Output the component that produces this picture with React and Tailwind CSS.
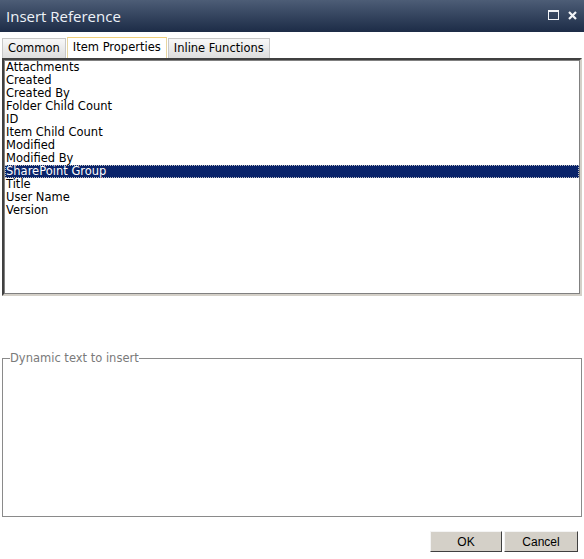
import React from "react";

const fields = [
  "Attachments",
  "Created",
  "Created By",
  "Folder Child Count",
  "ID",
  "Item Child Count",
  "Modified",
  "Modified By",
  "SharePoint Group",
  "Title",
  "User Name",
  "Version",
];

const tabs = ["Common", "Item Properties", "Inline Functions"];

function TitleBar() {
  return (
    <div className="h-[32px] flex items-center justify-between pl-[6px] pr-[6px] bg-gradient-to-b from-[#4d5d76] to-[#1d2c47]">
      <span className="text-[15px] text-[#eef2f8] font-['Open_Sans',sans-serif] leading-none">
        Insert Reference
      </span>
      <div className="flex items-center gap-[9px] mr-[1px] mb-[2px]">
        {/* maximize */}
        <svg width="11" height="10" viewBox="0 0 11 10">
          <rect x="0.5" y="0.5" width="10" height="9" fill="none" stroke="#f2f4f8" />
          <rect x="0" y="0" width="11" height="2" fill="#f2f4f8" />
        </svg>
        {/* close */}
        <svg width="9" height="9" viewBox="0 0 9 9">
          <path d="M1 1 L8 8 M8 1 L1 8" stroke="#f2f4f8" strokeWidth="2.2" />
        </svg>
      </div>
    </div>
  );
}

function Tabs({ active }) {
  return (
    <div className="flex items-end pl-[2px] h-[26px]">
      {tabs.map((t) => (
        <div
          key={t}
          className={
            t === active
              ? "h-[21px] px-[5px] flex items-center border border-b-0 border-[#e8d6a0] border-t-[#f0cf7a] bg-white mr-[1px]"
              : "h-[20px] px-[5px] flex items-center border border-b-0 border-[#c8c8c8] bg-gradient-to-b from-[#f8f8f8] to-[#dedede] mr-[1px]"
          }
        >
          {t}
        </div>
      ))}
    </div>
  );
}

export default function App() {
  const selected = "SharePoint Group";
  return (
    <div className="w-[584px] h-[559px] bg-white text-[11.5px] text-black font-['DejaVu_Sans',sans-serif] overflow-hidden">
      <TitleBar />
      <Tabs active="Item Properties" />
      <div className="mx-[2px] h-[238px] border-2 border-t-[#404040] border-l-[#404040] border-b-[#d4d0c8] border-r-[#d4d0c8] ring-1 ring-inset ring-[#808080]">
        <div className="pt-[1px] px-[1px]">
          {fields.map((f) => (
            <div
              key={f}
              className={
                f === selected
                  ? "h-[13px] leading-[13px] pl-[1px] bg-[#0a246a] text-white outline-1 outline-dotted outline-[#c0c0c0] -outline-offset-1"
                  : "h-[13px] leading-[13px] pl-[1px]"
              }
            >
              {f}
            </div>
          ))}
        </div>
      </div>
      <fieldset className="mx-[2px] mt-[57px] h-[164px] border border-[#8a8a8a] px-[6px]">
        <legend className="text-[#7a7a7a] px-0 ml-[1px] leading-none">Dynamic text to insert</legend>
      </fieldset>
      <div className="flex justify-end gap-[2px] pr-[6px] mt-[14px]">
        <button className="w-[72px] h-[21px] bg-[#d4d0c8] border border-t-[#f4f4f4] border-l-[#f4f4f4] border-b-[#404040] border-r-[#404040] text-[12px] font-['Liberation_Sans',sans-serif]">
          OK
        </button>
        <button className="w-[74px] h-[21px] bg-[#d4d0c8] border border-t-[#f4f4f4] border-l-[#f4f4f4] border-b-[#404040] border-r-[#404040] text-[12px] font-['Liberation_Sans',sans-serif]">
          Cancel
        </button>
      </div>
    </div>
  );
}
